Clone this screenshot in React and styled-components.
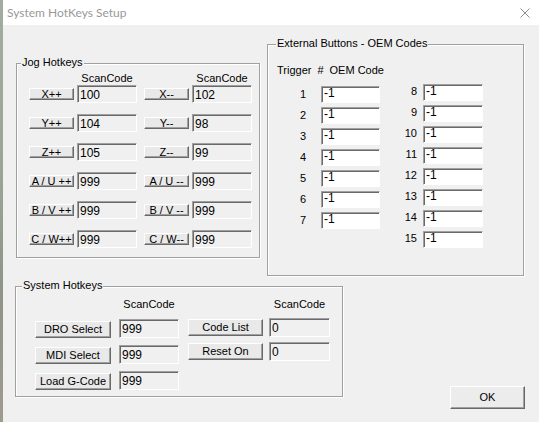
import React from "react";
import styled, { createGlobalStyle } from "styled-components";

const Global = createGlobalStyle`
  html, body { margin: 0; padding: 0; overflow: hidden; }
  body { font-family: "Liberation Sans", Arial, sans-serif; }
  * { box-sizing: border-box; }
`;

const Screen = styled.div`
  display: flex;
  width: 539px;
  height: 422px;
`;

const DesktopEdge = styled.div`
  width: 3px;
  flex-shrink: 0;
  background: linear-gradient(#a3ad9f, #9ba596 40%, #8e9487 70%, #a09a8e);
`;

const Window = styled.div`
  flex: 1;
  display: flex;
  flex-direction: column;
  min-width: 0;
`;

const TitleBar = styled.div`
  height: 25px;
  flex-shrink: 0;
  background: #ffffff;
  display: flex;
  align-items: center;
  justify-content: space-between;
  padding: 0 9px 0 4px;
`;

const Title = styled.span`
  font-family: "Segoe UI", Lato, "Noto Sans", sans-serif;
  font-size: 12px;
  color: #999999;
  padding-bottom: 1px;
`;

const CloseIcon = () => (
  <svg width="10" height="10" viewBox="0 0 10 10">
    <path d="M0.5 0.5 L9.5 9.5 M9.5 0.5 L0.5 9.5" stroke="#8c8c8c" strokeWidth="1" fill="none" />
  </svg>
);

const Body = styled.div`
  flex: 1;
  background: #f0f0f0;
  padding: 0 14px 0 13px;
  display: flex;
  flex-direction: column;
`;

const Row = styled.div`
  display: flex;
  align-items: flex-start;
  margin-top: ${(p) => p.$mt || 0}px;
`;

const GroupBox = styled.div`
  position: relative;
  width: ${(p) => p.$w}px;
  height: ${(p) => p.$h}px;
  margin-top: ${(p) => p.$mt || 0}px;
  margin-left: ${(p) => p.$ml || 0}px;
  border: 1px solid #a0a0a0;
  box-shadow: 1px 1px 0 #ffffff, inset 1px 1px 0 #ffffff;
  flex-shrink: 0;
`;

const Caption = styled.span`
  position: absolute;
  top: -8px;
  left: ${(p) => p.$left}px;
  padding: 0 1px;
  background: #f0f0f0;
  font-size: 11px;
  line-height: 13px;
  color: #000;
  white-space: nowrap;
`;

const Label = styled.span`
  display: block;
  font-size: 11px;
  line-height: 13px;
  color: #000;
  white-space: nowrap;
  width: ${(p) => (p.$w ? `${p.$w}px` : "auto")};
  margin-left: ${(p) => p.$ml || 0}px;
  text-align: ${(p) => p.$align || "left"};
`;

const Button = styled.button`
  width: ${(p) => p.$w}px;
  height: ${(p) => p.$h}px;
  margin: 0;
  padding: 0;
  flex-shrink: 0;
  background: #e9e9e9;
  border: 1px solid;
  border-color: #ffffff #696969 #696969 #ffffff;
  box-shadow: inset -1px -1px 0 #a0a0a0;
  font-family: "Liberation Sans", Arial, sans-serif;
  font-size: 11px;
  line-height: ${(p) => p.$lh}px;
  color: #000;
  white-space: nowrap;
  overflow: visible;
  text-align: center;
  display: block;
`;

const Field = styled.input`
  width: ${(p) => p.$w}px;
  height: ${(p) => p.$h}px;
  margin: 0;
  padding: ${(p) => p.$pt || 0}px 2px ${(p) => p.$pb || 0}px 2px;
  flex-shrink: 0;
  background: ${(p) => p.$bg || "#f0f0f0"};
  border: 1px solid;
  border-color: #a0a0a0 #ffffff #ffffff #a0a0a0;
  box-shadow: inset 1px 1px 0 #696969;
  font-family: "Liberation Sans", Arial, sans-serif;
  font-size: 12px;
  color: #000;
  outline: none;
`;

/* ---------- Jog hotkeys ---------- */

const JogInner = styled.div`
  padding: 8px 0 0 12px;
`;

const PairGrid = styled.div`
  display: grid;
  grid-template-columns: repeat(2, 108px);
  column-gap: 7px;
  row-gap: ${(p) => p.$rg || 0}px;
`;

const KeyCell = styled.div`
  display: flex;
  align-items: center;
  gap: 3px;
  height: 18px;
`;

const jogRows = [
  ["X++", "100", "X--", "102"],
  ["Y++", "104", "Y--", "98"],
  ["Z++", "105", "Z--", "99"],
  ["A / U ++", "999", "A / U --", "999"],
  ["B / V ++", "999", "B / V --", "999"],
  ["C / W++", "999", "C / W--", "999"],
];

const JogHotkeys = () => (
  <GroupBox $w={244} $h={195} $mt={38}>
    <Caption $left={4}>Jog Hotkeys</Caption>
    <JogInner>
      <PairGrid>
        <Label $ml={48} $w={60} $align="center">ScanCode</Label>
        <Label $ml={48} $w={60} $align="center">ScanCode</Label>
      </PairGrid>
      <PairGrid $rg={11}>
        {jogRows.map((r) => (
          <React.Fragment key={r[0]}>
            <KeyCell>
              <Button $w={45} $h={12} $lh={10}>{r[0]}</Button>
              <Field $w={60} $h={18} $pt={1} readOnly value={r[1]} />
            </KeyCell>
            <KeyCell>
              <Button $w={45} $h={12} $lh={10}>{r[2]}</Button>
              <Field $w={60} $h={18} $pt={1} readOnly value={r[3]} />
            </KeyCell>
          </React.Fragment>
        ))}
      </PairGrid>
    </JogInner>
  </GroupBox>
);

/* ---------- External buttons ---------- */

const ExtInner = styled.div`
  padding: 19px 0 0 9px;
`;

const ExtHeader = styled.div`
  display: flex;
  align-items: center;
`;

const ExtColumns = styled.div`
  display: flex;
  align-items: flex-start;
  gap: 21px;
  margin-top: 7px;
  padding-left: 13px;
`;

const TriggerColumn = styled.div`
  display: grid;
  grid-template-columns: 16px ${(p) => p.$fw}px;
  grid-auto-rows: 17px;
  column-gap: ${(p) => p.$gap}px;
  row-gap: 4px;
  align-items: center;
  padding-top: ${(p) => p.$pt || 0}px;
`;

const TriggerNum = styled.span`
  font-size: 11px;
  line-height: 13px;
  text-align: right;
  color: #000;
  margin-top: ${(p) => p.$mt || 0}px;
`;

const ExternalButtons = () => (
  <GroupBox $w={257} $h={232} $mt={19} $ml={7}>
    <Caption $left={8}>External Buttons - OEM Codes</Caption>
    <ExtInner>
      <ExtHeader>
        <Label>Trigger</Label>
        <Label $ml={6}>#</Label>
        <Label $ml={6}>OEM Code</Label>
      </ExtHeader>
      <ExtColumns>
        <TriggerColumn $fw={59} $gap={15} $pt={2}>
          {[1, 2, 3, 4, 5, 6, 7].map((n) => (
            <React.Fragment key={n}>
              <TriggerNum>{n}</TriggerNum>
              <Field $w={59} $h={17} $pb={3} $bg="#ffffff" readOnly value="-1" />
            </React.Fragment>
          ))}
        </TriggerColumn>
        <TriggerColumn $fw={60} $gap={6}>
          {[8, 9, 10, 11, 12, 13, 14, 15].map((n) => (
            <React.Fragment key={n}>
              <TriggerNum $mt={-2}>{n}</TriggerNum>
              <Field $w={60} $h={17} $pb={3} $bg="#ffffff" readOnly value="-1" />
            </React.Fragment>
          ))}
        </TriggerColumn>
      </ExtColumns>
    </ExtInner>
  </GroupBox>
);

/* ---------- System hotkeys ---------- */

const SysInner = styled.div`
  display: flex;
  align-items: flex-start;
  gap: 9px;
  padding: 11px 0 0 19px;
`;

const SysColumn = styled.div`
  display: flex;
  flex-direction: column;
  gap: ${(p) => p.$gap}px;
`;

const SysHeader = styled.div`
  display: flex;
  margin-bottom: ${(p) => p.$mb - p.$gap}px;
`;

const SysRow = styled.div`
  display: flex;
  align-items: flex-end;
  gap: ${(p) => p.$gap}px;
`;

const SysButton = styled(Button)`
  margin-bottom: ${(p) => p.$mb || 0}px;
`;

const SystemHotkeys = () => (
  <GroupBox $w={328} $h={111} $ml={-1}>
    <Caption $left={6}>System Hotkeys</Caption>
    <SysInner>
      <SysColumn $gap={7}>
        <SysHeader $mb={8} $gap={7}>
          <Label $ml={84} $w={60} $align="center">ScanCode</Label>
        </SysHeader>
        {["DRO Select", "MDI Select", "Load G-Code"].map((b) => (
          <SysRow key={b} $gap={8}>
            <SysButton $w={76} $h={17} $lh={15}>{b}</SysButton>
            <Field $w={60} $h={19} readOnly value="999" />
          </SysRow>
        ))}
      </SysColumn>
      <SysColumn $gap={5}>
        <SysHeader $mb={7} $gap={5}>
          <Label $ml={81} $w={61} $align="center">ScanCode</Label>
        </SysHeader>
        {["Code List", "Reset On"].map((b) => (
          <SysRow key={b} $gap={6}>
            <SysButton $w={75} $h={17} $lh={15} $mb={1}>{b}</SysButton>
            <Field $w={61} $h={19} readOnly value="0" />
          </SysRow>
        ))}
      </SysColumn>
    </SysInner>
  </GroupBox>
);

const OkButton = styled(Button)`
  margin-left: auto;
  margin-top: 100px;
  background: #ececec;
`;

export default function App() {
  return (
    <Screen>
      <Global />
      <DesktopEdge />
      <Window>
        <TitleBar>
          <Title>System HotKeys Setup</Title>
          <CloseIcon />
        </TitleBar>
        <Body>
          <Row>
            <JogHotkeys />
            <ExternalButtons />
          </Row>
          <Row $mt={10}>
            <SystemHotkeys />
            <OkButton $w={75} $h={23} $lh={21}>OK</OkButton>
          </Row>
        </Body>
      </Window>
    </Screen>
  );
}
